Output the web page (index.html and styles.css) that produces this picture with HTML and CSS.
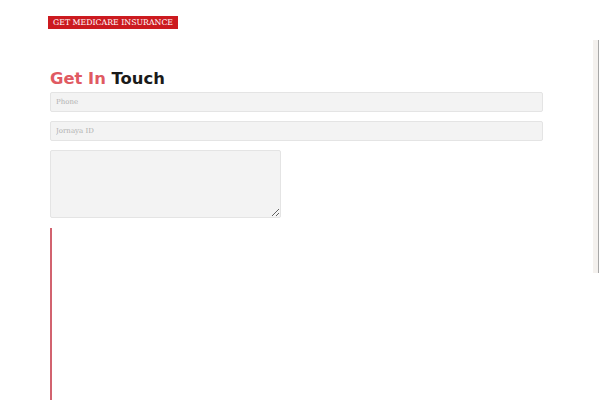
FILE: index.html
```html
<!DOCTYPE html>
<html>
<head>
<meta charset="utf-8">
<link rel="stylesheet" href="styles.css">
</head>
<body>
<div class="top"><a class="cta">GET MEDICARE INSURANCE</a></div>
<div class="form">
  <h2 class="title"><span class="accent">Get In</span> Touch</h2>
  <input class="field" type="text" placeholder="Phone">
  <input class="field" type="text" placeholder="Jornaya ID">
  <textarea class="area"></textarea>
  <div class="quote"></div>
</div>
<div class="sidebar"></div>
</body>
</html>
```
FILE: styles.css
```css
html, body { margin: 0; padding: 0; background: #fff; overflow: hidden; height: 400px; }
body { font-family: "DejaVu Sans", sans-serif; }
.top { display: flex; padding: 16px 0 0 48px; height: 14px; }
.cta {
  display: block;
  background: #cc1a1f;
  color: #fff;
  font-family: "DejaVu Serif", serif;
  font-size: 7.8px;
  line-height: 13px;
  height: 13px;
  padding: 0 5px;
  white-space: nowrap;
}
.form { padding: 0 0 0 50px; display: flex; flex-direction: column; align-items: flex-start; }
.title {
  margin: 38px 0 0 0;
  font-size: 16.4px;
  line-height: 22px;
  font-weight: bold;
  color: #1a1a1a;
  height: 24px;
}
.accent { color: #e05a62; }
.field {
  box-sizing: border-box;
  width: 493px;
  height: 20px;
  margin: 0 0 9px 0;
  background: #f3f3f3;
  border: 1px solid #e4e4e4;
  border-radius: 2px;
  padding: 0 5px;
  font-family: "DejaVu Serif", serif;
  font-size: 7px;
  outline: none;
}
.field::placeholder { color: #b0b0b0; }
.area {
  box-sizing: border-box;
  width: 231px;
  height: 68px;
  margin: 0;
  background: #f3f3f3;
  border: 1px solid #e4e4e4;
  border-radius: 2px;
  resize: both;
}
.quote {
  margin-top: 10px;
  width: 2px;
  height: 180px;
  background: #d2636f;
}
.sidebar {
  position: absolute;
  top: 40px;
  left: 593px;
  width: 5px;
  height: 233px;
  background: #f4f1ee;
  border-right: 1px solid #a8a8a8;
}
```
